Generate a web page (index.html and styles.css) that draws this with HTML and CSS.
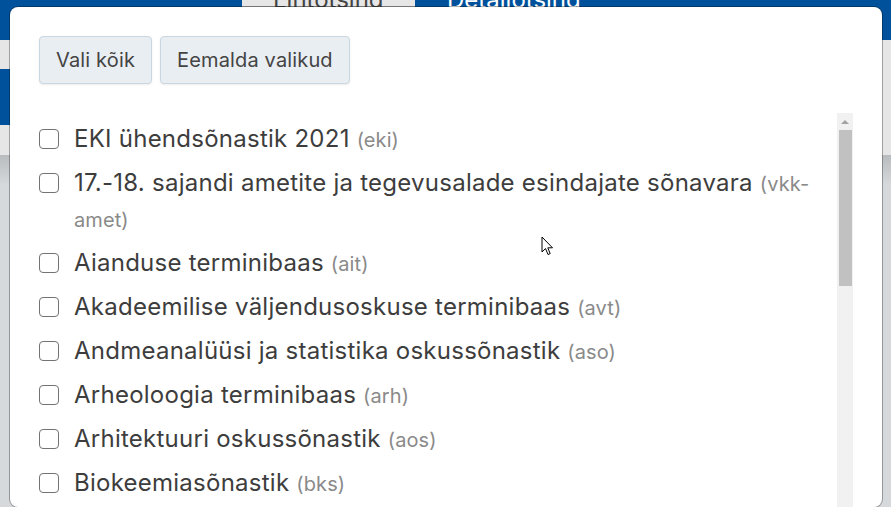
FILE: index.html
```html
<!DOCTYPE html>
<html lang="et">
<head>
<meta charset="utf-8">
<title>Sõnakogud</title>
<link rel="stylesheet" href="styles.css">
</head>
<body>
<div class="page">
  <header class="topbar">
    <div class="tab tab-plain">Lihtotsing</div>
    <div class="tab tab-active">Detailotsing</div>
  </header>
  <div class="band band-light"></div>
  <div class="band band-search"><div class="search-block"></div></div>
  <div class="band band-light band-short"></div>
  <div class="content"></div>
</div>

<div class="modal">
  <div class="actions">
    <button class="btn">Vali kõik</button>
    <button class="btn">Eemalda valikud</button>
  </div>
  <div class="list-wrap">
    <ul class="list">
      <li class="item"><span class="box"></span><span class="label">EKI ühendsõnastik 2021 <span class="code">(eki)</span></span></li>
      <li class="item"><span class="box"></span><span class="label">17.-18. sajandi ametite ja tegevusalade esindajate sõnavara <span class="code">(vkk-amet)</span></span></li>
      <li class="item"><span class="box"></span><span class="label">Aianduse terminibaas <span class="code">(ait)</span></span></li>
      <li class="item"><span class="box"></span><span class="label">Akadeemilise väljendusoskuse terminibaas <span class="code">(avt)</span></span></li>
      <li class="item"><span class="box"></span><span class="label">Andmeanalüüsi ja statistika oskussõnastik <span class="code">(aso)</span></span></li>
      <li class="item"><span class="box"></span><span class="label">Arheoloogia terminibaas <span class="code">(arh)</span></span></li>
      <li class="item"><span class="box"></span><span class="label">Arhitektuuri oskussõnastik <span class="code">(aos)</span></span></li>
      <li class="item"><span class="box"></span><span class="label">Biokeemiasõnastik <span class="code">(bks)</span></span></li>
    </ul>
    <div class="scrollbar">
      <div class="sb-btn"><span class="sb-arrow"></span></div>
      <div class="sb-thumb"></div>
    </div>
  </div>
  <svg class="cursor" width="13" height="20" viewBox="0 0 13 20">
    <path d="M1 1 L1 16 L4.5 12.5 L7 18.5 L9.2 17.6 L6.8 11.8 L11.5 11.8 Z" fill="#fff" stroke="#000" stroke-width="1" stroke-linejoin="round"/>
  </svg>
</div>
</body>
</html>
```

FILE: styles.css
```css
* { box-sizing: border-box; }

html, body {
  margin: 0;
  padding: 0;
}

body {
  width: 891px;
  height: 507px;
  overflow: hidden;
  position: relative;
  font-family: Inter, "Noto Sans", Arial, sans-serif;
  background: #d5d9dc;
}

.page {
  display: flex;
  flex-direction: column;
  height: 100%;
}

.topbar {
  height: 40px;
  background: #00519b;
  display: flex;
  padding-left: 242px;
  flex-shrink: 0;
}

.tab {
  font-size: 24px;
  line-height: 0;
  height: 7px;
  padding-top: 0;
}

.tab-plain {
  width: 173px;
  background: #e6e6e6;
  color: #444;
  border-bottom: 1px solid #a8a8a8;
  padding-left: 31px;
}

.tab-active {
  width: 200px;
  color: #fff;
  padding-left: 32px;
}

.band {
  flex-shrink: 0;
}

.band-light {
  height: 29px;
  background: #e6e6e6;
}

.band-short {
  height: 30px;
}

.band-search {
  height: 56px;
  background: #e6e6e6;
  display: flex;
}

.search-block {
  width: 820px;
  background: #00519b;
}

.content {
  flex: 1;
  background: linear-gradient(#b9bcbf, #d5d9dc 30px);
}

.modal {
  position: absolute;
  left: 10px;
  top: 7px;
  width: 872px;
  height: 500px;
  background: #fff;
  border-radius: 8px;
  box-shadow: 0 0 0 1px rgba(0, 0, 0, 0.3);
  padding: 29px 29px 0 29px;
  display: flex;
  flex-direction: column;
}

.actions {
  display: flex;
  gap: 8px;
  margin-bottom: 29px;
}

.btn {
  height: 48px;
  padding: 0 16px;
  font-family: Inter, "Noto Sans", Arial, sans-serif;
  font-size: 20px;
  letter-spacing: 0.15px;
  color: #444;
  background: #e9eef2;
  border: 1px solid #c9d7e1;
  border-radius: 4px;
  box-shadow: 0 1px 2px rgba(0, 0, 0, 0.08);
}

.list-wrap {
  flex: 1;
  display: flex;
  min-height: 0;
}

.list {
  flex: 1;
  list-style: none;
  margin: 0;
  padding: 4px 20px 0 0;
  overflow: hidden;
}

.item {
  display: flex;
  align-items: flex-start;
  padding: 4px 0;
}

.box {
  flex-shrink: 0;
  width: 20px;
  height: 20px;
  margin-top: 8px;
  margin-right: 15px;
  border: 1.5px solid #737373;
  border-radius: 4px;
  background: #fff;
}

.label {
  font-size: 24px;
  line-height: 36px;
  letter-spacing: 0.25px;
  color: #3d3d3d;
}

.code {
  font-size: 20px;
  line-height: 1;
  letter-spacing: 0.1px;
  color: #8a8a8a;
}

.scrollbar {
  width: 16px;
  flex-shrink: 0;
  background: #f1f1f1;
  display: flex;
  flex-direction: column;
}

.sb-btn {
  height: 17px;
  display: flex;
  align-items: center;
  justify-content: center;
}

.sb-arrow {
  width: 0;
  height: 0;
  border-left: 4px solid transparent;
  border-right: 4px solid transparent;
  border-bottom: 4px solid #a3a3a3;
}

.sb-thumb {
  height: 156px;
  margin: 0 1px 0 2px;
  background: #c1c1c1;
}

.cursor {
  position: absolute;
  left: 531px;
  top: 229px;
}
```
